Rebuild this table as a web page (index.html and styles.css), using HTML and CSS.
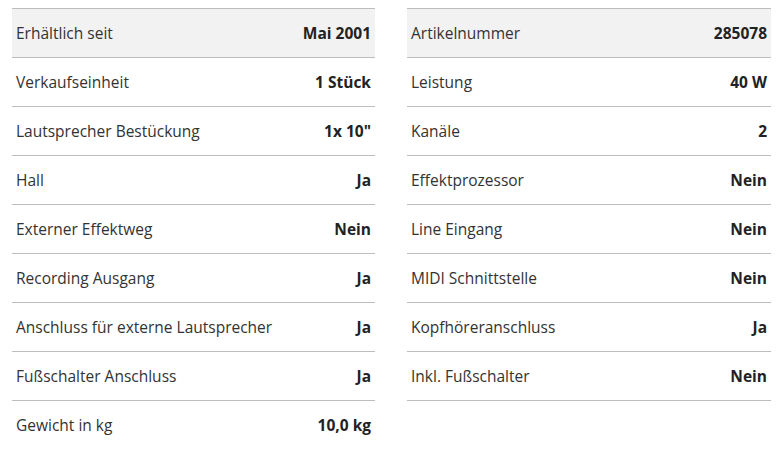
FILE: index.html
```html
<!DOCTYPE html>
<html lang="de">
<head>
<meta charset="utf-8">
<link rel="stylesheet" href="styles.css">
</head>
<body>
<div class="specs">
  <div class="table">
    <div class="row first"><span class="k">Erhältlich seit</span><span class="v">Mai 2001</span></div>
    <div class="row"><span class="k">Verkaufseinheit</span><span class="v">1 Stück</span></div>
    <div class="row"><span class="k">Lautsprecher Bestückung</span><span class="v">1x 10"</span></div>
    <div class="row"><span class="k">Hall</span><span class="v">Ja</span></div>
    <div class="row"><span class="k">Externer Effektweg</span><span class="v">Nein</span></div>
    <div class="row"><span class="k">Recording Ausgang</span><span class="v">Ja</span></div>
    <div class="row"><span class="k">Anschluss für externe Lautsprecher</span><span class="v">Ja</span></div>
    <div class="row"><span class="k">Fußschalter Anschluss</span><span class="v">Ja</span></div>
    <div class="row"><span class="k">Gewicht in kg</span><span class="v">10,0 kg</span></div>
  </div>
  <div class="table closed">
    <div class="row first"><span class="k">Artikelnummer</span><span class="v">285078</span></div>
    <div class="row"><span class="k">Leistung</span><span class="v">40 W</span></div>
    <div class="row"><span class="k">Kanäle</span><span class="v">2</span></div>
    <div class="row"><span class="k">Effektprozessor</span><span class="v">Nein</span></div>
    <div class="row"><span class="k">Line Eingang</span><span class="v">Nein</span></div>
    <div class="row"><span class="k">MIDI Schnittstelle</span><span class="v">Nein</span></div>
    <div class="row"><span class="k">Kopfhöreranschluss</span><span class="v">Ja</span></div>
    <div class="row"><span class="k">Inkl. Fußschalter</span><span class="v">Nein</span></div>
  </div>
</div>
</body>
</html>
```
FILE: styles.css
```css
html, body {
  margin: 0;
  padding: 0;
  background: #fff;
}
body {
  font-family: "Open Sans", "Liberation Sans", sans-serif;
  font-size: 15.5px;
  color: #333;
}
.specs {
  display: grid;
  grid-template-columns: 363px 364px;
  column-gap: 32px;
  align-items: start;
  padding: 8px 0 0 12px;
}
.table {
  display: flex;
  flex-direction: column;
}
.row {
  display: flex;
  justify-content: space-between;
  align-items: center;
  height: 48px;
  border-top: 1px solid #bdbdbd;
  padding: 0 4px;
}
.row.first {
  background: #f2f2f2;
}
.closed {
  border-bottom: 1px solid #bdbdbd;
}
.v {
  font-weight: 700;
  color: #222;
}
```
